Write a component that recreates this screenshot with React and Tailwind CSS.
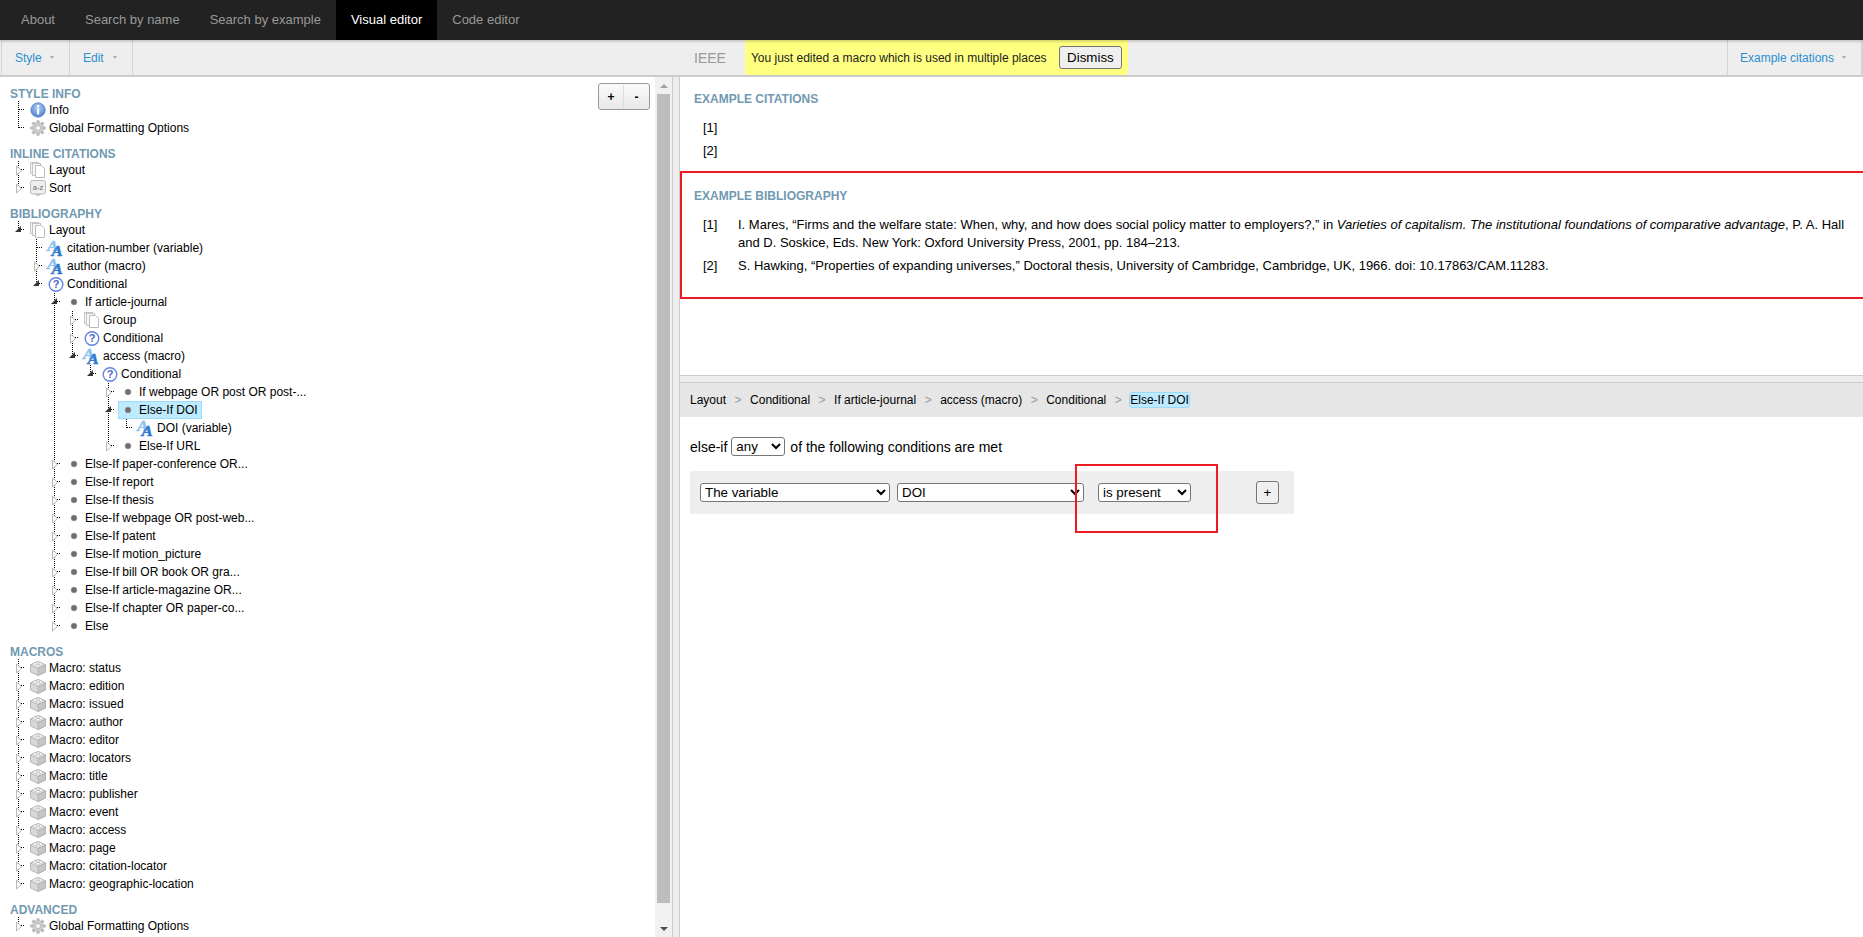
import React from 'react';

// Tree icons
const InfoIcon = () => (
  <svg width="16" height="16" viewBox="0 0 16 16" className="shrink-0">
    <defs>
      <radialGradient id="infoFill" cx="50%" cy="35%" r="65%">
        <stop offset="0%" stopColor="#b5d0f5" />
        <stop offset="100%" stopColor="#4a80d0" />
      </radialGradient>
    </defs>
    <circle cx="8" cy="8" r="7.2" fill="url(#infoFill)" stroke="#5a84c8" strokeWidth="0.8" />
    <rect x="7" y="3" width="2.2" height="2.2" fill="#fff" />
    <rect x="7" y="6.4" width="2.2" height="6" fill="#fff" />
  </svg>
);

const GearIcon = () => (
  <svg width="16" height="16" viewBox="0 0 16 16" className="shrink-0">
    {[0, 45, 90, 135, 180, 225, 270, 315].map((r) => (
      <rect key={r} x="6.4" y="0.2" width="3.2" height="4" rx="0.6" fill="#bcbcbc" transform={`rotate(${r} 8 8)`} />
    ))}
    <circle cx="8" cy="8" r="5.4" fill="#cfcfcf" stroke="#ababab" strokeWidth="0.6" />
    <circle cx="8" cy="8" r="2.6" fill="#f5f5f5" stroke="#a8a8a8" strokeWidth="0.7" />
  </svg>
);

const PagesIcon = () => (
  <svg width="16" height="16" viewBox="0 0 16 16" className="shrink-0">
    <rect x="0.5" y="0.5" width="8" height="11" fill="#f6f6f6" stroke="#c4c4c4" />
    <rect x="2.5" y="1.5" width="8" height="12" fill="#f8f8f8" stroke="#c4c4c4" />
    <path d="M5.5 3.5h6l3 3v9h-9z" fill="#fff" stroke="#bababa" />
  </svg>
);

const SortIcon = () => (
  <svg width="16" height="16" viewBox="0 0 16 16" className="shrink-0">
    <path d="M3 13.5 8 16l5-2.5z" fill="#bbb" />
    <rect x="0.5" y="0.5" width="15" height="13.5" rx="2" fill="#eee" stroke="#bbb" />
    <text x="8" y="10" textAnchor="middle" fontSize="7.5" fill="#666" fontFamily="Liberation Sans, sans-serif">a-z</text>
  </svg>
);

const StyleIcon = () => (
  <svg width="16" height="16" viewBox="0 0 16 16" className="shrink-0 overflow-visible">
    <text transform="translate(-1 10.5) scale(1.2 1)" fontSize="14" fontWeight="700" fontStyle="italic" fill="#8cc2ef" stroke="#8cc2ef" strokeWidth="0.4" fontFamily="Liberation Serif, serif">A</text>
    <text transform="translate(3.5 16) scale(1.2 1)" fontSize="14" fontWeight="700" fontStyle="italic" fill="#2f78d4" stroke="#2f78d4" strokeWidth="0.4" fontFamily="Liberation Serif, serif">A</text>
  </svg>
);

const QuestionIcon = () => (
  <svg width="16" height="16" viewBox="0 0 16 16" className="shrink-0">
    <circle cx="8" cy="8.5" r="6.8" fill="#fff" stroke="#6484de" strokeWidth="1.4" />
    <text x="8" y="12.4" textAnchor="middle" fontSize="11" fontWeight="700" fill="#4868c8" fontFamily="Liberation Sans, sans-serif">?</text>
  </svg>
);

const DotIcon = () => (
  <svg width="16" height="16" viewBox="0 0 16 16" className="shrink-0">
    <circle cx="8" cy="8" r="3" fill="#6e6e6e" stroke="#aaa" strokeWidth="0.6" />
  </svg>
);

const BrickIcon = () => (
  <svg width="16" height="16" viewBox="0 0 16 16" className="shrink-0">
    <path d="M8 1.5 15.5 5v7L8 15.5.5 12V5z" fill="#d8d8d8" stroke="#a8a8a8" strokeWidth="0.8" />
    <path d="M.5 5 8 8.5 15.5 5 8 1.5z" fill="#f4f4f4" stroke="#a8a8a8" strokeWidth="0.7" />
    <path d="M8 8.5v7l7.5-3.5V5z" fill="#c6c6c6" stroke="#a8a8a8" strokeWidth="0.6" />
    <ellipse cx="5.2" cy="4" rx="2" ry="1.3" fill="#fff" stroke="#aaa" strokeWidth="0.6" />
    <ellipse cx="10.8" cy="4" rx="2" ry="1.3" fill="#fff" stroke="#aaa" strokeWidth="0.6" />
    <ellipse cx="8" cy="5.8" rx="2" ry="1.3" fill="#fff" stroke="#aaa" strokeWidth="0.6" />
  </svg>
);

const icons = {
  info: InfoIcon,
  gear: GearIcon,
  pages: PagesIcon,
  sort: SortIcon,
  style: StyleIcon,
  cond: QuestionIcon,
  dot: DotIcon,
  brick: BrickIcon,
};

const leaf = (t, i) => ({ t, i });
const closed = (t, i) => ({ t, i, closed: true });
const open = (t, i, kids, sel) => ({ t, i, kids, sel });

const macros = ['status', 'edition', 'issued', 'author', 'editor', 'locators', 'title', 'publisher', 'event', 'access', 'page', 'citation-locator', 'geographic-location'];

const sections = [
  { title: 'STYLE INFO', nodes: [leaf('Info', 'info'), leaf('Global Formatting Options', 'gear')] },
  { title: 'INLINE CITATIONS', nodes: [closed('Layout', 'pages'), closed('Sort', 'sort')] },
  {
    title: 'BIBLIOGRAPHY',
    nodes: [
      open('Layout', 'pages', [
        leaf('citation-number (variable)', 'style'),
        closed('author (macro)', 'style'),
        open('Conditional', 'cond', [
          open('If article-journal', 'dot', [
            closed('Group', 'pages'),
            closed('Conditional', 'cond'),
            open('access (macro)', 'style', [
              open('Conditional', 'cond', [
                closed('If webpage OR post OR post-...', 'dot'),
                open('Else-If DOI', 'dot', [leaf('DOI (variable)', 'style')], true),
                closed('Else-If URL', 'dot'),
              ]),
            ]),
          ]),
          closed('Else-If paper-conference OR...', 'dot'),
          closed('Else-If report', 'dot'),
          closed('Else-If thesis', 'dot'),
          closed('Else-If webpage OR post-web...', 'dot'),
          closed('Else-If patent', 'dot'),
          closed('Else-If motion_picture', 'dot'),
          closed('Else-If bill OR book OR gra...', 'dot'),
          closed('Else-If article-magazine OR...', 'dot'),
          closed('Else-If chapter OR paper-co...', 'dot'),
          closed('Else', 'dot'),
        ]),
      ]),
    ],
  },
  { title: 'MACROS', nodes: macros.map((m) => closed(`Macro: ${m}`, 'brick')) },
  { title: 'ADVANCED', nodes: [closed('Global Formatting Options', 'gear')] },
];

const dots = { stroke: '#000', strokeWidth: 1, strokeDasharray: '1 1', shapeRendering: 'crispEdges' };

const Guide = ({ on }) => (
  <svg width="18" height="18" className="shrink-0">
    {on && <line x1="8.5" y1="0" x2="8.5" y2="18" {...dots} />}
  </svg>
);

const Branch = ({ last, node }) => (
  <svg width="18" height="18" className="shrink-0">
    <line x1="8.5" y1="0" x2="8.5" y2={last ? 9 : 18} {...dots} />
    <line x1="9" y1="8.5" x2="15" y2="8.5" {...dots} />
    {node.closed && <polygon points="6.5,5 11.5,9.5 6.5,14" fill="#fff" stroke="#b8b8b8" />}
    {node.kids && <polygon points="5,11 11,11 11,5" fill="#333" />}
  </svg>
);

const TreeNode = ({ node, last, guides }) => {
  const Icon = icons[node.i];
  return (
    <>
      <div className="flex h-[18px] items-center">
        {guides.map((g, i) => <Guide key={i} on={g} />)}
        <Branch last={last} node={node} />
        <span className={`flex h-[18px] items-center border pl-px pr-[3px] ${node.sel ? 'border-[#9bdcfb] bg-[#beebff]' : 'border-transparent'}`}>
          <Icon />
          <span className="ml-[3px] whitespace-nowrap">{node.t}</span>
        </span>
      </div>
      {node.kids?.map((k, i) => (
        <TreeNode key={i} node={k} last={i === node.kids.length - 1} guides={[...guides, !last]} />
      ))}
    </>
  );
};

const Caret = () => <span className="h-0 w-0 border-x-[2.5px] border-t-[3px] border-x-transparent border-t-[#aaa]" />;

const MenuItem = ({ label, className = '' }) => (
  <div className={`flex h-full items-center justify-between border-r border-[#d4d4d4] text-xs text-[#2b8fd0] ${className}`}>
    <span>{label}</span>
    <Caret />
  </div>
);

const Heading = ({ children, className = '' }) => (
  <h3 className={`text-xs leading-[14px] font-bold text-[#7199b1] ${className}`}>{children}</h3>
);

const Scrollbar = () => (
  <div className="flex w-[17px] shrink-0 flex-col items-center bg-[#f1f1f1]">
    <div className="flex h-[17px] items-center justify-center">
      <span className="h-0 w-0 border-x-[4px] border-b-[4px] border-x-transparent border-b-[#a3a3a3]" />
    </div>
    <div className="min-h-0 flex-1">
      <div className="h-[809px] w-[13px] bg-[#bdbdbd]" />
    </div>
    <div className="flex h-[17px] items-center justify-center">
      <span className="h-0 w-0 border-x-[4px] border-t-[4px] border-x-transparent border-t-[#505050]" />
    </div>
  </div>
);

const selectCls = 'h-[19px] rounded-[3px] border border-[#767676] bg-white text-[13.33px] leading-none text-black';

const crumbs = ['Layout', 'Conditional', 'If article-journal', 'access (macro)', 'Conditional'];

export default function App() {
  return (
    <div className="flex h-screen flex-col overflow-hidden bg-white font-['Liberation_Sans',Arial,sans-serif] text-xs text-black">
      <nav className="relative z-10 flex h-10 shrink-0 bg-[#222] pl-[6px] text-[13px] text-[#999] shadow-[0_1px_3px_rgba(0,0,0,0.25)]">
        <a className="flex items-center px-[15px]">About</a>
        <a className="flex items-center px-[15px]">Search by name</a>
        <a className="flex items-center px-[15px]">Search by example</a>
        <a className="flex items-center bg-black px-[15px] text-white">Visual editor</a>
        <a className="flex items-center px-[15px]">Code editor</a>
      </nav>

      <div className="flex h-[37px] shrink-0 border-b-2 border-[#ccc] bg-[#eee]">
        <div className="flex h-full w-[680px] shrink-0 pl-px">
          <MenuItem label="Style" className="w-[69px] border-l pl-[13px] pr-[15px]" />
          <MenuItem label="Edit" className="w-[63px] pl-[13px] pr-[15px]" />
        </div>
        <div className="flex min-w-0 flex-1 items-start">
          <span className="mt-[9px] ml-[14px] text-sm leading-[18px] text-[#999]">IEEE</span>
          <div className="ml-[19px] flex h-[35px] w-[383px] items-center rounded-b-[4px] bg-[#ffff80] pl-[6px] text-[#222]">
            <span>You just edited a macro which is used in multiple places</span>
            <button className="ml-auto mr-[6px] h-[23px] w-[63px] rounded-[3px] border border-[#767676] bg-[#efefef] text-[13.33px] text-black">Dismiss</button>
          </div>
          <MenuItem label="Example citations" className="ml-auto w-[136px] border-r-2 border-l pl-[12px] pr-[15px]" />
        </div>
      </div>

      <div className="flex min-h-0 flex-1">
        <div className="relative min-w-0 flex-1 overflow-hidden pt-[10px] pl-[10px]">
          <div className="absolute top-[6px] right-[5px] flex h-[27px] w-[52px] items-center rounded-[3px] border border-[#999] bg-gradient-to-b from-[#fafafa] to-[#e8e8e8] text-xs font-bold">
            <span className="flex h-[24px] w-[25px] items-center justify-center border-r border-[#ddd]">+</span>
            <span className="flex flex-1 items-center justify-center">-</span>
          </div>
          {sections.map((s, n) => (
            <section key={s.title} className={n ? 'mt-[10px]' : ''}>
              <Heading>{s.title}</Heading>
              {s.nodes.map((node, i) => (
                <TreeNode key={i} node={node} last={i === s.nodes.length - 1} guides={[]} />
              ))}
            </section>
          ))}
        </div>
        <Scrollbar />

        <div className="w-[8px] shrink-0 border-x border-[#ccc] bg-[#eee]" />

        <div className="flex w-[1183px] shrink-0 flex-col">
          <div className="flex h-[298px] shrink-0 flex-col text-[13px]">
            <div className="h-[94px] pt-[15px] pl-[14px]">
              <Heading>EXAMPLE CITATIONS</Heading>
              <div className="mt-[13px] pl-[9px] leading-[18px]">[1]</div>
              <div className="mt-[5px] pl-[9px] leading-[18px]">[2]</div>
            </div>
            <div className="h-[128px] border-y-2 border-l-2 border-[#ed1c24] pt-[16px] pl-[12px]">
              <Heading>EXAMPLE BIBLIOGRAPHY</Heading>
              <div className="mt-[13px] flex pl-[9px] leading-[18px]">
                <span className="w-[35px] shrink-0">[1]</span>
                <span>
                  I. Mares, “Firms and the welfare state: When, why, and how does social policy matter to employers?,” in <i>Varieties of capitalism. The institutional foundations of comparative advantage</i>, P. A. Hall and D. Soskice, Eds. New York: Oxford University Press, 2001, pp. 184–213.
                </span>
              </div>
              <div className="mt-[5px] flex pl-[9px] leading-[18px]">
                <span className="w-[35px] shrink-0">[2]</span>
                <span>S. Hawking, “Properties of expanding universes,” Doctoral thesis, University of Cambridge, Cambridge, UK, 1966. doi: 10.17863/CAM.11283.</span>
              </div>
            </div>
          </div>

          <div className="h-[8px] shrink-0 border-y border-[#ccc] bg-[#eee]" />

          <div className="relative min-h-0 flex-1">
            <div className="flex h-[34px] items-center bg-[#e6e6e6] pl-[10px]">
              {crumbs.map((c, i) => (
                <React.Fragment key={i}>
                  <span>{c}</span>
                  <span className="mx-[8.5px] text-[#999]">&gt;</span>
                </React.Fragment>
              ))}
              <span className="rounded-[2px] bg-[#beebff] leading-[14px] outline outline-1 outline-[#9bdcfb]">Else-If DOI</span>
            </div>

            <div className="mt-[20px] flex h-[19px] items-center pl-[10px] text-sm">
              <span>else-if</span>
              <select defaultValue="any" className={`${selectCls} ml-[4px] w-[54px]`}>
                <option>any</option>
                <option>all</option>
                <option>none</option>
              </select>
              <span className="ml-[5px]">of the following conditions are met</span>
            </div>

            <div className="mt-[15px] ml-[10px] flex h-[43px] w-[604px] items-center bg-[#eee] pl-[10px]">
              <select defaultValue="The variable" className={`${selectCls} w-[190px]`}>
                <option>The variable</option>
              </select>
              <select defaultValue="DOI" className={`${selectCls} ml-[7px] w-[187px]`}>
                <option>DOI</option>
              </select>
              <select defaultValue="is present" className={`${selectCls} ml-[14px] w-[93px]`}>
                <option>is present</option>
              </select>
              <button className="ml-[65px] h-[23px] w-[23px] rounded-[3px] border border-[#767676] bg-[#efefef] text-[13.33px]">+</button>
            </div>

            <div className="absolute top-[81px] left-[395px] h-[69px] w-[143px] border-2 border-[#ed1c24]" />
          </div>
        </div>
      </div>
    </div>
  );
}
